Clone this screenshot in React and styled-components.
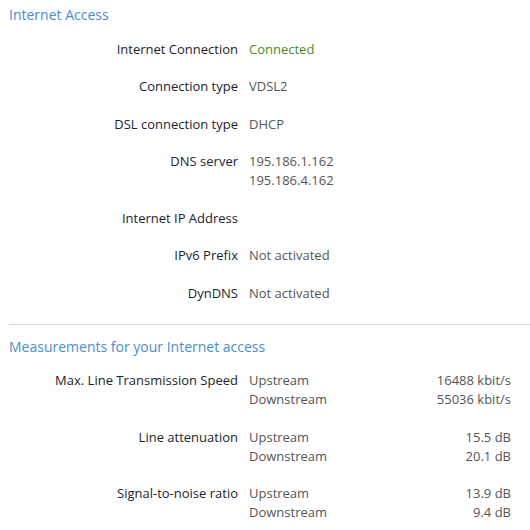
import React from "react";
import styled, { createGlobalStyle } from "styled-components";

const Global = createGlobalStyle`
  html, body { margin: 0; padding: 0; background: #fff; }
  body { font-family: "Open Sans", "Noto Sans", sans-serif; }
`;

const Page = styled.div`
  width: 530px;
  height: 530px;
  overflow: hidden;
  padding-left: 9px;
  box-sizing: border-box;
`;

const Section = styled.section`
  padding-top: ${(p) => p.$top}px;
  padding-bottom: ${(p) => p.$bottom || 0}px;
  border-bottom: ${(p) => (p.$divider ? "1px solid #dcdcdc" : "none")};
`;

const Heading = styled.h2`
  margin: 0 0 14.5px 0;
  font-size: 14px;
  font-weight: 400;
  line-height: 20px;
  color: #4a8dcf;
`;

const Rows = styled.div`
  display: flex;
  flex-direction: column;
  gap: 18.5px;
`;

const Row = styled.div`
  display: grid;
  grid-template-columns: 229px 1fr;
  column-gap: 11px;
  font-size: 13px;
  line-height: 19px;
`;

const Label = styled.div`
  text-align: right;
  color: #1a1e2e;
`;

const Value = styled.div`
  color: ${(p) => (p.$ok ? "#4a8a2a" : "#555")};
  white-space: pre-line;
`;

const Measure = styled.div`
  display: grid;
  grid-template-columns: 1fr auto;
  width: 262px;
  color: #555;
`;

const Num = styled.div`
  text-align: right;
`;

const info = [
  ["Internet Connection", "Connected", true],
  ["Connection type", "VDSL2"],
  ["DSL connection type", "DHCP"],
  ["DNS server", "195.186.1.162\n195.186.4.162"],
  ["Internet IP Address", ""],
  ["IPv6 Prefix", "Not activated"],
  ["DynDNS", "Not activated"],
];

const measures = [
  ["Max. Line Transmission Speed", "16488 kbit/s", "55036 kbit/s"],
  ["Line attenuation", "15.5 dB", "20.1 dB"],
  ["Signal-to-noise ratio", "13.9 dB", "9.4 dB"],
];

export default function App() {
  return (
    <Page>
      <Global />
      <Section $top={5} $bottom={21} $divider>
        <Heading>Internet Access</Heading>
        <Rows>
          {info.map(([l, v, ok]) => (
            <Row key={l}>
              <Label>{l}</Label>
              <Value $ok={ok}>{v || "\u00a0"}</Value>
            </Row>
          ))}
        </Rows>
      </Section>
      <Section $top={12}>
        <Heading>Measurements for your Internet access</Heading>
        <Rows>
          {measures.map(([l, up, down]) => (
            <Row key={l}>
              <Label>{l}</Label>
              <Measure>
                <div>Upstream</div>
                <Num>{up}</Num>
                <div>Downstream</div>
                <Num>{down}</Num>
              </Measure>
            </Row>
          ))}
        </Rows>
      </Section>
    </Page>
  );
}
